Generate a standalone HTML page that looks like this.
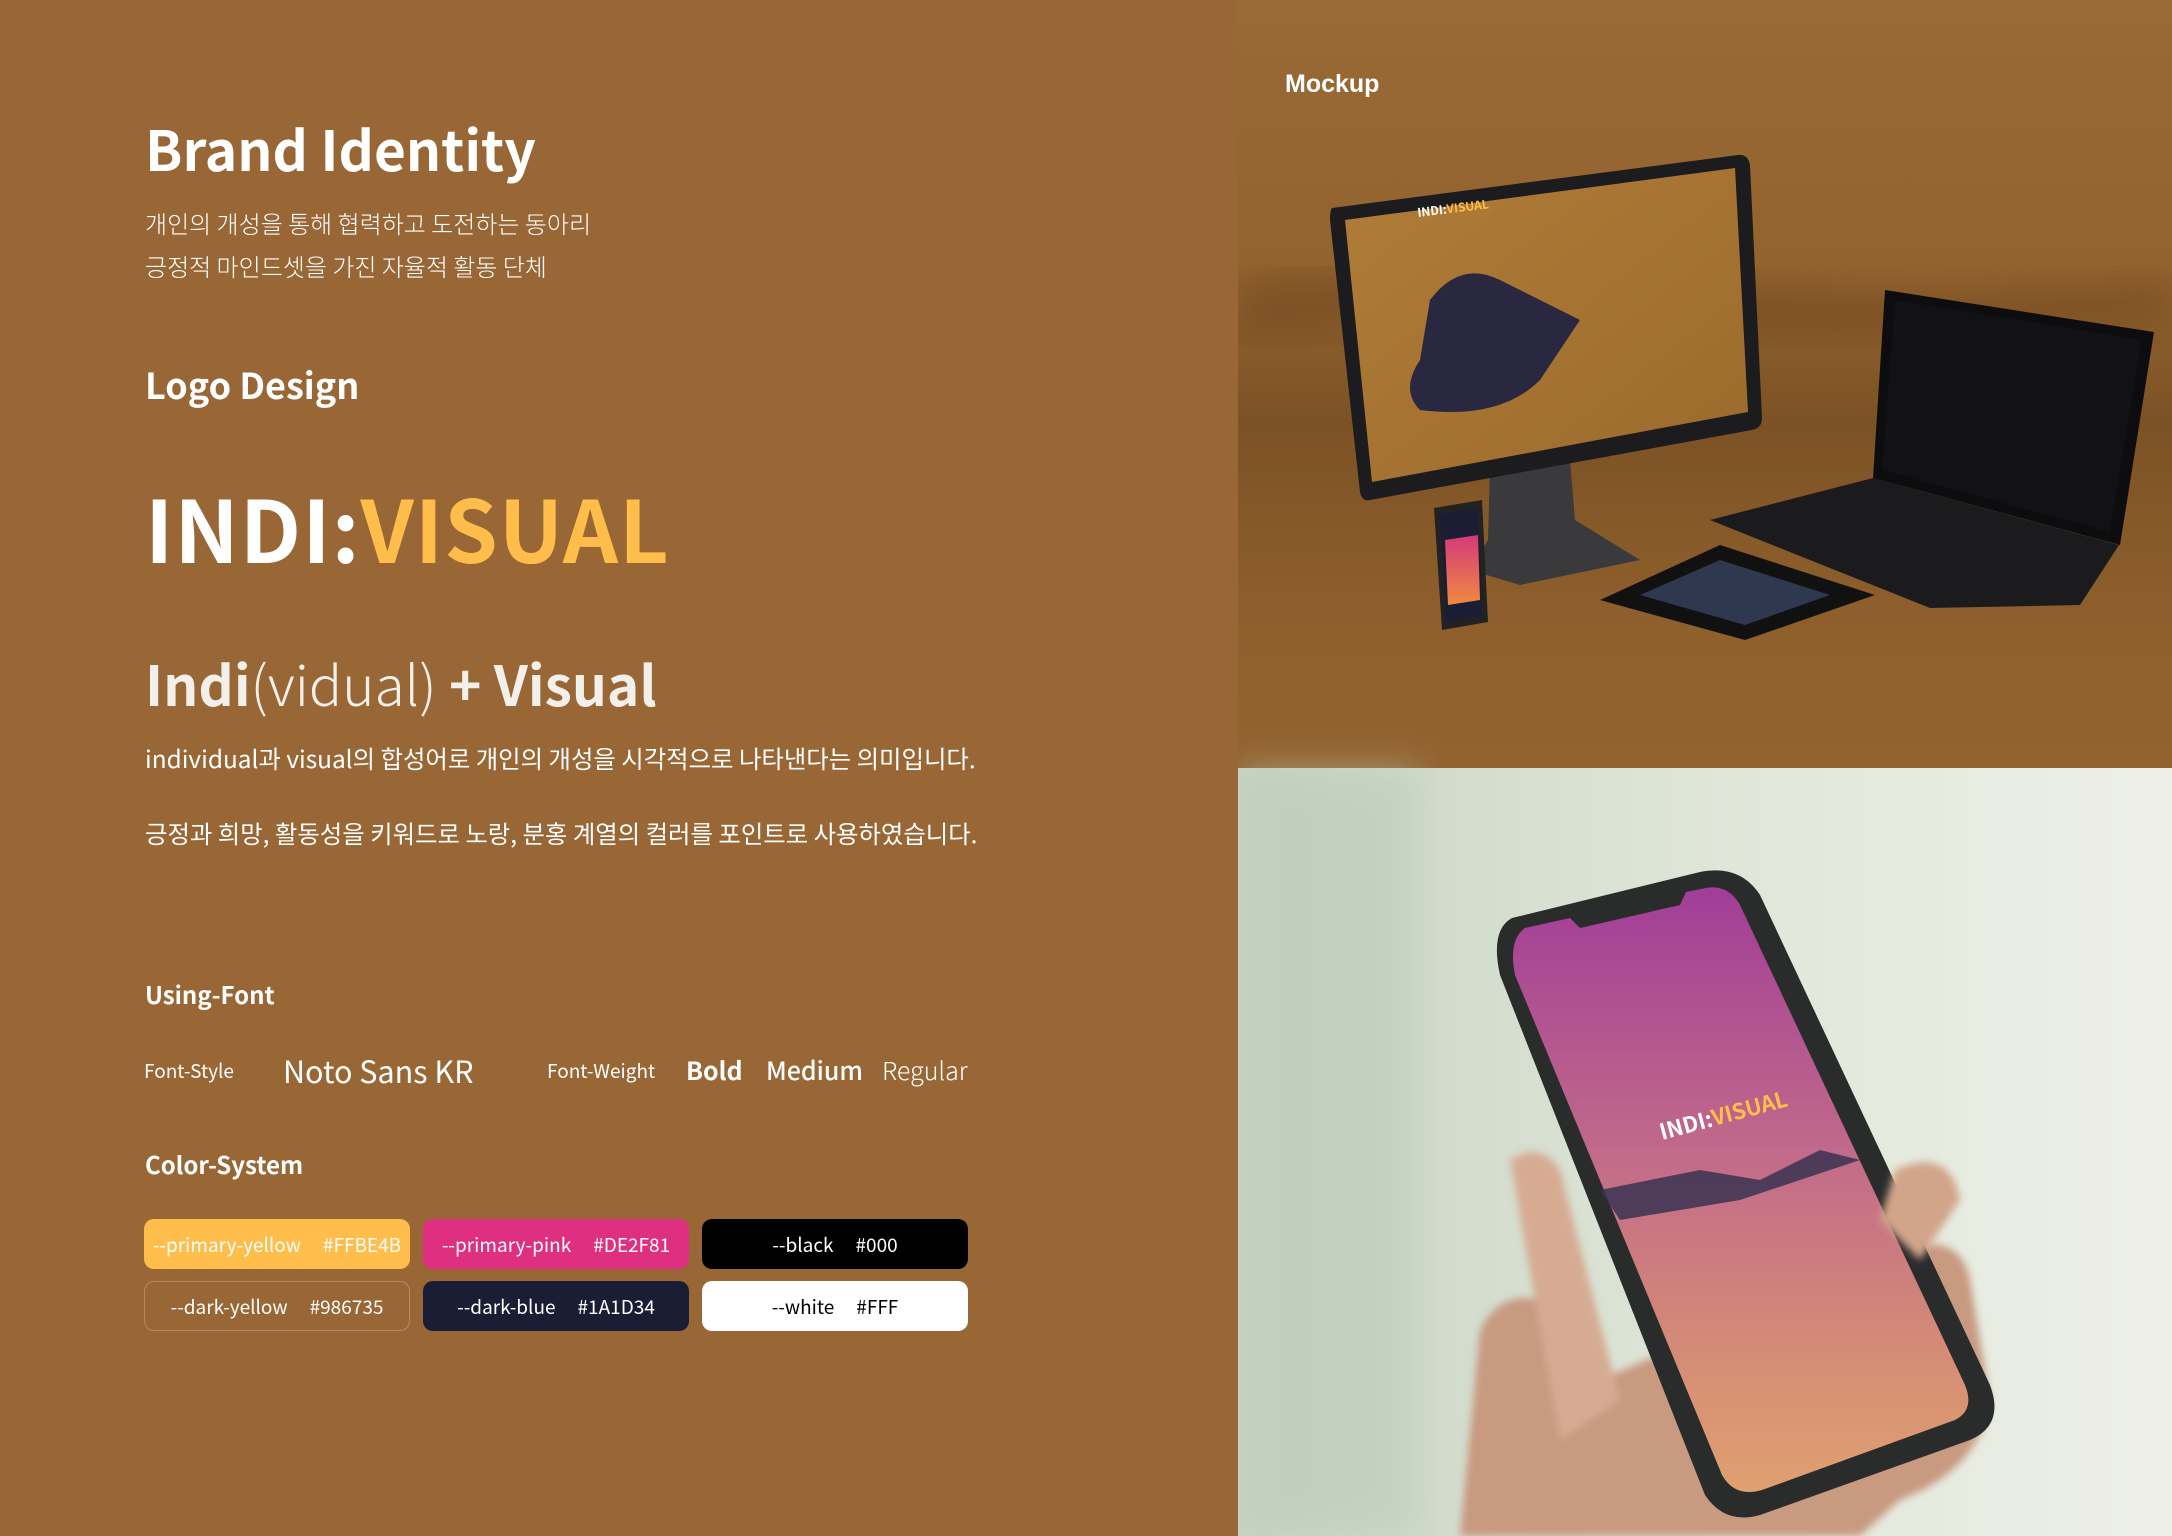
<!DOCTYPE html>
<html><head><meta charset="utf-8"><style>
*{margin:0;padding:0;box-sizing:border-box}
body{width:2172px;height:1536px;background:#986735;position:relative;overflow:hidden;font-family:"Noto Sans CJK KR","Liberation Sans",sans-serif;color:#fff}
.t{position:absolute;line-height:1;white-space:nowrap}
.sw{position:absolute;width:266px;height:50px;border-radius:10px;display:flex;align-items:center;justify-content:center;font-size:19px;gap:22px}
</style></head><body>
<div class="t" style="left:145px;top:120px;font-size:55px;font-weight:700">Brand Identity</div>
<div class="t" style="left:145px;top:211px;font-size:24px;font-weight:300">개인의 개성을 통해 협력하고 도전하는 동아리</div>
<div class="t" style="left:145px;top:254px;font-size:24px;font-weight:300">긍정적 마인드셋을 가진 자율적 활동 단체</div>
<div class="t" style="left:145px;top:366px;font-size:36px;font-weight:700">Logo Design</div>
<div class="t" style="left:145px;top:483px;font-size:86px;font-weight:700;letter-spacing:1px">INDI:<span style="color:#FFBE4B">VISUAL</span></div>
<div class="t" style="left:145px;top:655px;font-size:55px;color:#f3f0ec"><b>Indi</b><span style="font-weight:300">(vidual)</span> <b>+ Visual</b></div>
<div class="t" style="left:145px;top:747px;font-size:24.4px">individual과 visual의 합성어로 개인의 개성을 시각적으로 나타낸다는 의미입니다.</div>
<div class="t" style="left:145px;top:822px;font-size:24.4px">긍정과 희망, 활동성을 키워드로 노랑, 분홍 계열의 컬러를 포인트로 사용하였습니다.</div>
<div class="t" style="left:145px;top:982px;font-size:24px;font-weight:700">Using-Font</div>
<div class="t" style="left:144px;top:1061px;font-size:19px">Font-Style</div>
<div class="t" style="left:283px;top:1055px;font-size:30.5px">Noto Sans KR</div>
<div class="t" style="left:547px;top:1061px;font-size:19px">Font-Weight</div>
<div class="t" style="left:686px;top:1058px;font-size:25px;font-weight:700">Bold</div>
<div class="t" style="left:766px;top:1058px;font-size:25px;font-weight:500">Medium</div>
<div class="t" style="left:882px;top:1058px;font-size:25px;font-weight:300">Regular</div>
<div class="t" style="left:145px;top:1152px;font-size:24px;font-weight:700">Color-System</div>
<div class="sw" style="left:144px;top:1219px;background:#FFBE4B"><span>--primary-yellow</span><span>#FFBE4B</span></div>
<div class="sw" style="left:423px;top:1219px;background:#DE2F81"><span>--primary-pink</span><span>#DE2F81</span></div>
<div class="sw" style="left:702px;top:1219px;background:#000"><span>--black</span><span>#000</span></div>
<div class="sw" style="left:144px;top:1281px;border:1.5px solid #b48a5e"><span>--dark-yellow</span><span>#986735</span></div>
<div class="sw" style="left:423px;top:1281px;background:#1A1D34"><span>--dark-blue</span><span>#1A1D34</span></div>
<div class="sw" style="left:702px;top:1281px;background:#fff;color:#000"><span>--white</span><span>#FFF</span></div>

<svg style="position:absolute;left:1238px;top:0" width="934" height="1536" viewBox="1238 0 934 1536">
<defs>
<linearGradient id="bg1" x1="0" y1="0" x2="0" y2="1"><stop offset="0" stop-color="#9a6a36"/><stop offset=".35" stop-color="#93632f"/><stop offset=".55" stop-color="#7c5225"/><stop offset=".8" stop-color="#8e5f2c"/><stop offset="1" stop-color="#93632f"/></linearGradient>
<linearGradient id="scr" x1="0" y1="0" x2="1" y2="1"><stop offset="0" stop-color="#b07c38"/><stop offset="1" stop-color="#9b6a2c"/></linearGradient>
<linearGradient id="bg2" x1="0" y1="0" x2="1" y2="0"><stop offset="0" stop-color="#c8d4c4"/><stop offset=".5" stop-color="#dfe6d8"/><stop offset="1" stop-color="#eef0e8"/></linearGradient>
<linearGradient id="ps" x1="0" y1="0" x2="0" y2="1"><stop offset="0" stop-color="#a23d98"/><stop offset=".45" stop-color="#c26b8a"/><stop offset=".75" stop-color="#d48a76"/><stop offset="1" stop-color="#e0a070"/></linearGradient>
<linearGradient id="mini" x1="0" y1="0" x2="0" y2="1"><stop offset="0" stop-color="#d43a7a"/><stop offset="1" stop-color="#f08a40"/></linearGradient>
<filter id="bl"><feGaussianBlur stdDeviation="18"/></filter>
<filter id="bl2"><feGaussianBlur stdDeviation="4"/></filter>
</defs>
<rect x="1238" y="0" width="934" height="768" fill="url(#bg1)"/>
<path d="M1238 280 C1500 250 1800 320 2172 280 L2172 320 C1800 360 1500 300 1238 340Z" fill="#6a431d" opacity=".45" filter="url(#bl)"/>
<text x="1285" y="92" font-size="25" font-weight="700" fill="#fff" font-family="Liberation Sans,sans-serif">Mockup</text>
<path d="M1490 470 L1570 460 L1575 520 L1640 560 L1520 585 L1470 570 L1488 540Z" fill="#3a3a3c"/>
<path d="M1332 208 L1738 155 Q1748 154 1750 165 L1762 418 Q1762 428 1752 430 L1370 500 Q1362 502 1360 492 L1330 220 Q1330 210 1332 208Z" fill="#1c1c1e"/>
<path d="M1345 220 L1735 168 L1748 412 L1372 482Z" fill="url(#scr)"/>
<text x="1418" y="217" font-size="12" font-weight="700" fill="#fff" transform="rotate(-7 1418 217)">INDI:<tspan fill="#FFBE4B">VISUAL</tspan></text>
<path d="M1430 300 Q1460 260 1500 280 L1580 320 L1540 380 Q1500 420 1420 410 Q1400 390 1420 360Z" fill="#2a2740"/>
<path d="M1710 520 L1873 478 L2119 545 L2080 605 L1930 608Z" fill="#1b1b1d"/>
<path d="M1885 290 L2154 332 L2120 545 L1873 478Z" fill="#0d0d10"/>
<path d="M1895 300 L2142 340 L2110 532 L1882 470Z" fill="#121216"/>
<path d="M1600 600 L1720 545 L1875 595 L1745 640Z" fill="#111"/>
<path d="M1640 595 L1720 560 L1830 595 L1745 625Z" fill="#3a4a6a" opacity=".7"/>
<path d="M1434 508 L1482 500 L1488 622 L1442 630Z" fill="#222"/>
<path d="M1440 514 L1478 508 L1482 616 L1446 622Z" fill="#1a1d34"/>
<path d="M1445 540 L1478 535 L1480 600 L1448 605Z" fill="url(#mini)"/>
<rect x="1238" y="768" width="934" height="768" fill="url(#bg2)"/>
<rect x="1238" y="768" width="180" height="768" fill="#b9c7b6" opacity=".5" filter="url(#bl)"/>
<g filter="url(#bl2)">
<path d="M1460 1536 L1480 1330 Q1500 1290 1540 1300 L1600 1380 L1900 1250 Q1960 1230 1970 1280 L1990 1400 Q1980 1470 1900 1500 L1860 1536Z" fill="#c89a80"/>
<path d="M1510 1160 Q1540 1140 1560 1170 L1620 1400 L1560 1440 Z" fill="#d6ab92"/>
</g>
<path d="M1512 918 L1700 872 Q1740 864 1760 895 L1990 1385 Q2005 1425 1970 1440 L1760 1515 Q1725 1525 1705 1495 L1500 975 Q1490 930 1512 918Z" fill="#2a2c2c"/>
<path d="M1525 928 L1570 918 L1580 928 L1680 905 L1686 892 L1706 888 Q1728 884 1740 905 L1965 1385 Q1975 1410 1955 1420 L1762 1490 Q1735 1498 1722 1475 L1515 975 Q1508 940 1525 928Z" fill="url(#ps)"/>
<path d="M1600 1190 L1700 1170 L1760 1180 L1820 1150 L1860 1160 L1740 1200 L1620 1220Z" fill="#3a3352" opacity=".85"/>
<text x="1662" y="1140" font-size="22" font-weight="700" fill="#fff" transform="rotate(-15 1662 1140)">INDI:<tspan fill="#FFBE4B">VISUAL</tspan></text>
<path d="M1895 1170 Q1950 1145 1960 1200 L1920 1260 L1880 1220Z" fill="#d2a48a" filter="url(#bl2)"/>
</svg>
</body></html>
